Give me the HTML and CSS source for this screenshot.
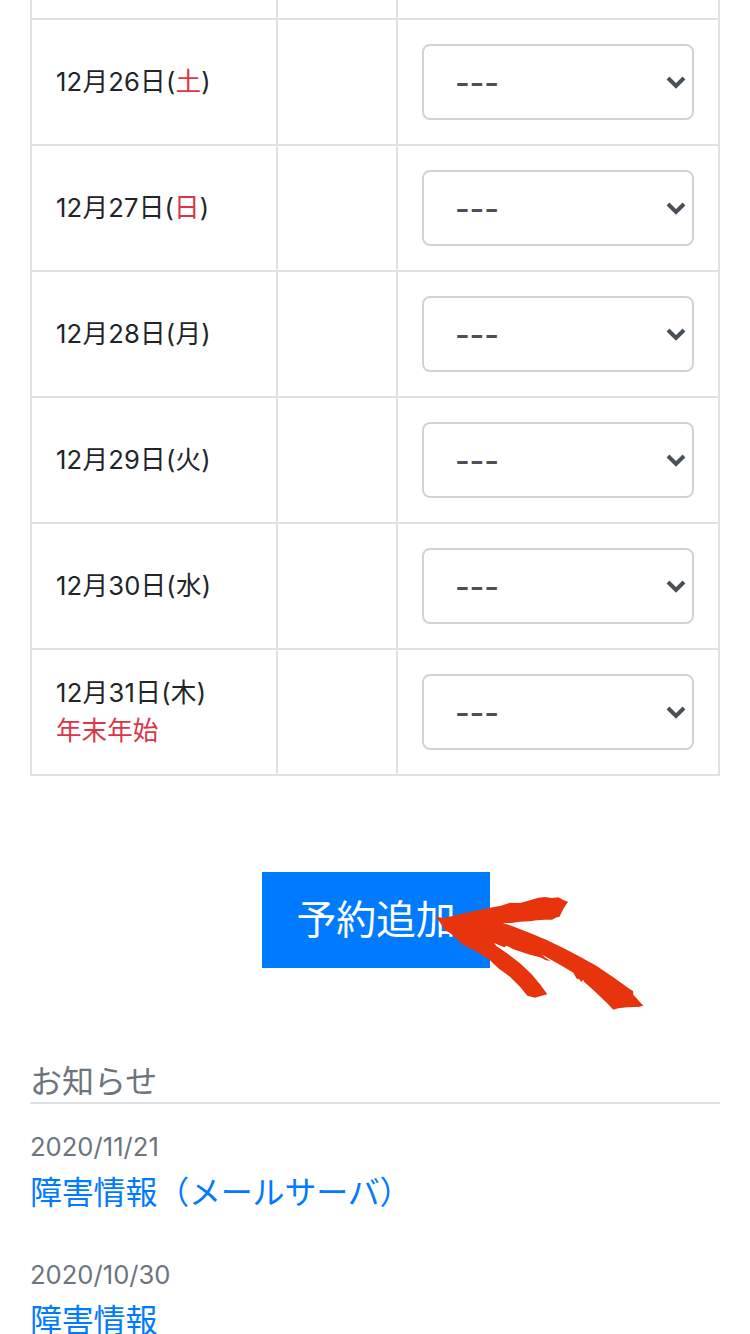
FILE: index.html
```html
<!DOCTYPE html>
<html lang="ja">
<head>
	<meta charset="utf-8">
	<meta name="viewport" content="width=device-width, initial-scale=1">
	<title>予約追加</title>
	<link rel="stylesheet" href="styles.css">
</head>
<body>
	<svg class="symbols" width="0" height="0">
		<symbol id="chevron" viewBox="0 0 20 14">
			<path d="M2 3 L10 11 L18 3" fill="none" stroke="#495057" stroke-width="4"/>
		</symbol>
	</svg>
	<div class="container">
		<table class="calendar">
			<colgroup>
				<col class="col-date">
				<col class="col-status">
				<col class="col-plan">
			</colgroup>
			<tr>
				<td></td>
				<td></td>
				<td></td>
			</tr>
			<tr>
				<td>12月26日(<span class="holiday">土</span>)</td>
				<td></td>
				<td><div class="plan"><select class="form-control"><option>---</option></select><svg class="chevron"><use href="#chevron"/></svg></div></td>
			</tr>
			<tr>
				<td>12月27日(<span class="holiday">日</span>)</td>
				<td></td>
				<td><div class="plan"><select class="form-control"><option>---</option></select><svg class="chevron"><use href="#chevron"/></svg></div></td>
			</tr>
			<tr>
				<td>12月28日(月)</td>
				<td></td>
				<td><div class="plan"><select class="form-control"><option>---</option></select><svg class="chevron"><use href="#chevron"/></svg></div></td>
			</tr>
			<tr>
				<td>12月29日(火)</td>
				<td></td>
				<td><div class="plan"><select class="form-control"><option>---</option></select><svg class="chevron"><use href="#chevron"/></svg></div></td>
			</tr>
			<tr>
				<td>12月30日(水)</td>
				<td></td>
				<td><div class="plan"><select class="form-control"><option>---</option></select><svg class="chevron"><use href="#chevron"/></svg></div></td>
			</tr>
			<tr>
				<td><span class="day">12月31日(木)</span><br><span class="holiday">年末年始</span></td>
				<td></td>
				<td><div class="plan"><select class="form-control"><option>---</option></select><svg class="chevron"><use href="#chevron"/></svg></div></td>
			</tr>
		</table>
		<div class="submit">
			<button class="btn" type="button">予約追加</button>
			<svg class="arrow" viewBox="0 0 660 390">
				<path d="M15 90 L22 96 L42 99 L80 90 L130 79 L180 68 L213 62 L240 53 L270 54 L300 46 L325 38 L345 36 L365 39 L385 37 L400 45 L414 50 L400 72 L388 96 L380 97 L366 104 L345 104 L320 106 L300 109 L270 110 L245 114 L218 114 L240 121 L300 144 L350 165 L400 189 L450 215 L500 243 L550 277 L600 313 L609 318 L610 329 L640 362 L625 366 L590 367 L565 370 L550 374 L530 353 L490 315 L462 290 L460 284 L454 291 L448 283 L440 281 L430 263 L400 245 L375 231 L350 217 L335 208 L346 218 L362 228 L348 226 L330 217 L300 209 L282 203 L250 193 L230 182 L223 187 L192 174 L200 184 L230 204 L270 235 L305 268 L330 298 L352 328 L335 332 L315 338 L292 332 L270 305 L240 275 L205 250 L180 226 L140 200 L100 180 L65 148 L45 135 L35 120 Z"/>
			</svg>
		</div>
		<h2 class="news-title">お知らせ</h2>
		<div class="news">
			<div class="date">2020/11/21</div>
			<a href="#">障害情報（メールサーバ）</a>
		</div>
		<div class="news">
			<div class="date">2020/10/30</div>
			<a href="#">障害情報</a>
		</div>
	</div>
</body>
</html>
```
FILE: styles.css
```css
html, body {
	margin: 0;
	padding: 0;
	height: 1334px;
	overflow: hidden;
}
body {
	font-family: Inter, "Noto Sans CJK JP", sans-serif;
	font-size: 32px;
	line-height: 1.5;
	color: #212529;
	background-color: #fff;
}
.symbols {
	display: block;
}
.container {
	margin-top: -108px;
	padding: 0 30px;
}
.calendar {
	width: 690px;
	table-layout: fixed;
	border-collapse: collapse;
	font-size: 25.6px;
}
.col-date {
	width: 246px;
}
.col-status {
	width: 120px;
}
.calendar td {
	box-sizing: border-box;
	height: 126px;
	padding: 0 24px;
	border: 2px solid #dee2e6;
	line-height: 38px;
	letter-spacing: .2px;
	vertical-align: middle;
}
.calendar .day {
	letter-spacing: .3px;
}
.holiday {
	color: #dc3545;
}
.day ~ .holiday {
	letter-spacing: 0;
}
.plan {
	display: grid;
	align-items: center;
}
.form-control {
	grid-area: 1 / 1;
	box-sizing: border-box;
	width: 100%;
	height: 76px;
	padding: 0 31px;
	border: 2px solid #ced4da;
	border-radius: 8px;
	appearance: none;
	background-color: #fff;
	color: #495057;
	font-family: inherit;
	font-size: 32px;
	font-weight: 500;
	letter-spacing: -.2px;
}
.chevron {
	grid-area: 1 / 1;
	justify-self: end;
	width: 20px;
	height: 14px;
	margin-right: 8px;
	pointer-events: none;
}
.submit {
	position: relative;
	display: flex;
	justify-content: center;
	margin-top: 96px;
	padding-left: 2px;
}
.btn {
	width: 228px;
	height: 96px;
	padding: 0 0 6px;
	border: 0;
	background-color: #007bff;
	color: #fff;
	font-family: inherit;
	font-size: 40px;
	letter-spacing: -.2px;
}
.arrow {
	position: absolute;
	left: 400px;
	top: 13px;
	width: 220px;
	height: 130px;
	fill: #e8340c;
}
.news-title {
	margin: 88px 0 24px;
	padding-top: 6px;
	border-bottom: 2px solid #dee2e6;
	color: #6c757d;
	font-size: 32px;
	font-weight: 400;
	line-height: 40px;
}
.news {
	margin-bottom: 39px;
}
.date {
	color: #6c757d;
	font-size: 25.6px;
	line-height: 38px;
}
.news a {
	display: block;
	padding-top: 3px;
	color: #007bff;
	line-height: 48px;
	letter-spacing: -.2px;
	text-decoration: none;
}
```
